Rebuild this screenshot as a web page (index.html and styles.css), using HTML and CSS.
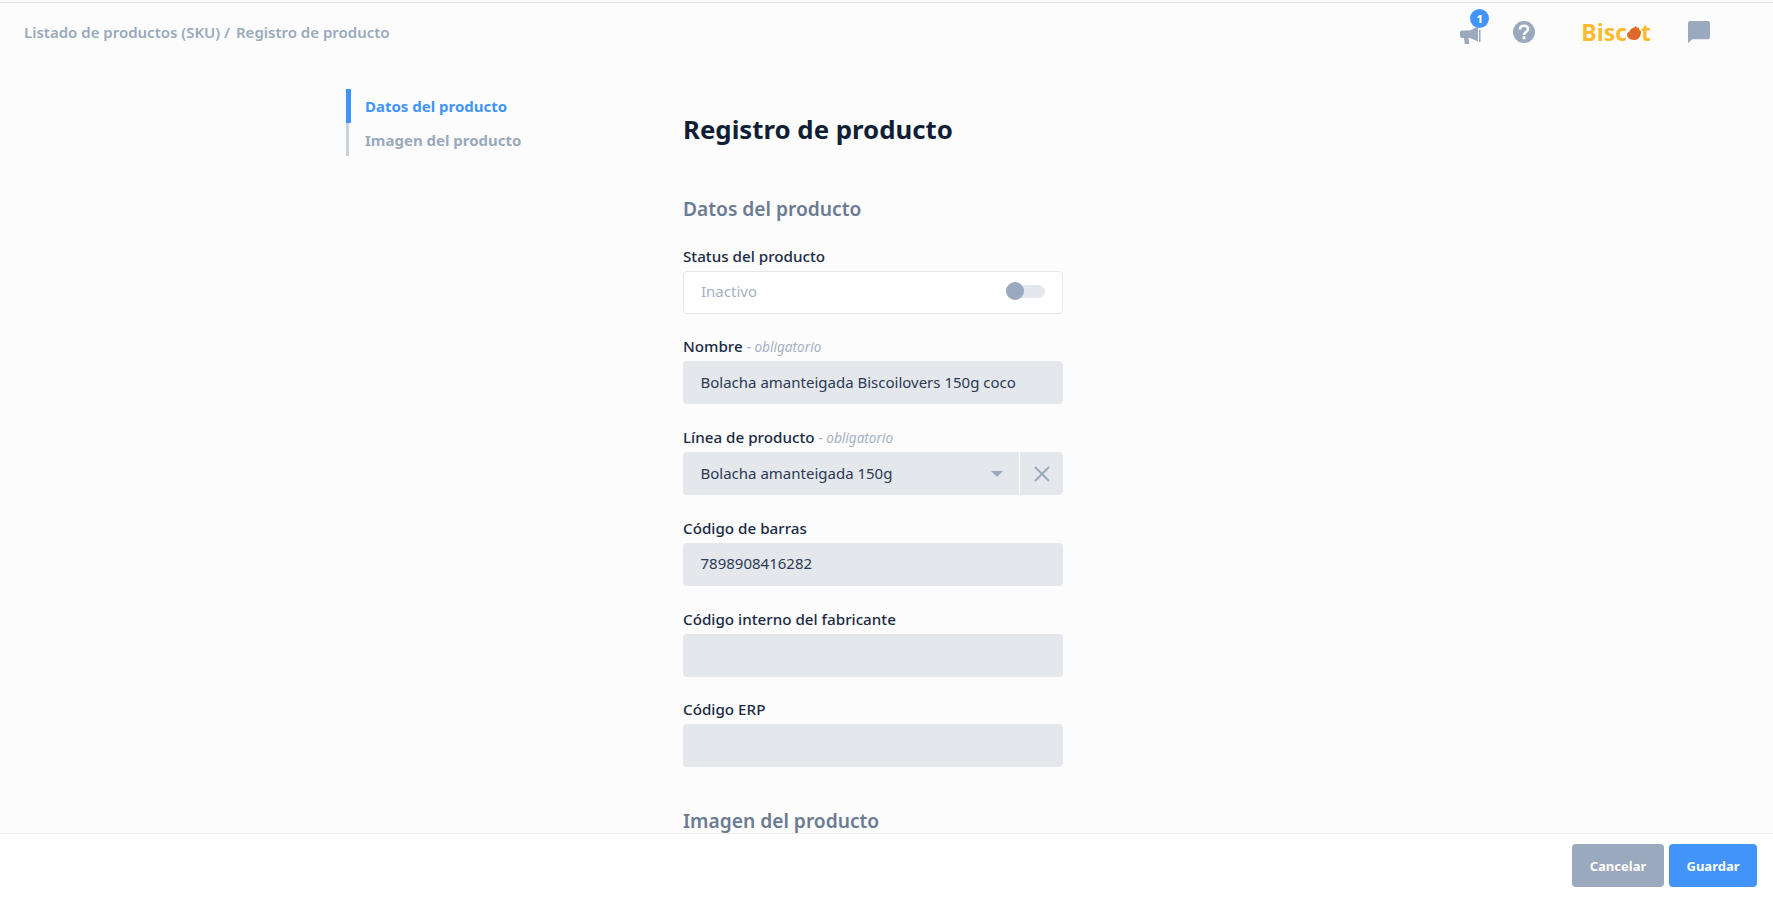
FILE: index.html
```html
<!doctype html>
<html>
<head>
    <meta charset="utf-8">
    <title>Registro de producto</title>
    <link rel="stylesheet" href="styles.css">
</head>
<body>
    <header class="topbar">
        <div class="breadcrumb">Listado de productos (SKU) / <span class="crumb-current">Registro de producto</span></div>
        <div class="topbar-icons">
            <div class="icon-news">
                <svg width="24" height="24" viewBox="0 0 24 24">
                    <path fill="#9aa9bd" d="M1 9.500c0-1.200.9-2 2-2h8l8-4v15l-8-3.600H9.500l.8 6.100H5.800l-.8-6.100H3c-1.100 0-2-.9-2-2z"/>
                    <rect x="20" y="7" width="1.500" height="12" fill="#9aa9bd"/>
                </svg>
                <span class="badge">1</span>
            </div>
            <svg class="icon-help" width="24" height="24" viewBox="0 0 24 24">
                <circle cx="12" cy="12" r="11" fill="#9aa9bd"/>
                <path fill="none" stroke="#fff" stroke-width="2.600" d="M8 9.500c0-2.400 1.800-3.700 4-3.700s4 1.300 4 3.400c0 2.900-4 2.800-4 5.800"/>
                <rect x="10.600" y="16.400" width="2.800" height="2.800" fill="#fff"/>
            </svg>
            <div class="logo">Bisc<svg class="logo-dot" width="14" height="14" viewBox="0 0 15 15"><path fill="#e0692a" d="M7.500 1.500 9.500 0l1 1.600 2.200.2.500 2.200L15 6c.2 5-3 9-7.500 9C3 15 0 12.500 0 9.500 0 8 1 6.700 2.300 6.500 3 4 5 2.300 7.500 1.500z"/></svg>t</div>
            <svg class="icon-chat" width="22" height="23" viewBox="0 0 24 25">
                <path fill="#9aa9bd" d="M2.500 1h19C22.900 1 24 2 24 3.500v15c0 1.400-1.100 2.500-2.500 2.500H4.500L1 24.500c-.5.400-1 .2-1-.5V3.500C0 2 1.100 1 2.500 1z"/>
            </svg>
        </div>
    </header>

    <main class="page">
        <nav class="side-nav">
            <a class="side-link active">Datos del producto</a>
            <a class="side-link">Imagen del producto</a>
        </nav>
        <section class="content">
            <h1 class="page-title">Registro de producto</h1>
            <h2 class="section-title">Datos del producto</h2>

            <div class="field">
                <label>Status del producto</label>
                <div class="status-box">
                    <span>Inactivo</span>
                    <span class="toggle"><span class="toggle-knob"></span></span>
                </div>
            </div>
            <div class="field">
                <label>Nombre <em>- obligatorio</em></label>
                <div class="input">Bolacha amanteigada Biscoilovers 150g coco</div>
            </div>
            <div class="field">
                <label>Línea de producto <em>- obligatorio</em></label>
                <div class="select-row">
                    <div class="input select">
                        <span>Bolacha amanteigada 150g</span>
                        <span class="caret"></span>
                    </div>
                    <div class="clear-btn">
                        <svg width="16" height="16" viewBox="0 0 16 16"><path stroke="#9aa9bd" stroke-width="2" d="M1 1l14 14M15 1L1 15"/></svg>
                    </div>
                </div>
            </div>
            <div class="field">
                <label>Código de barras</label>
                <div class="input">7898908416282</div>
            </div>
            <div class="field">
                <label>Código interno del fabricante</label>
                <div class="input"></div>
            </div>
            <div class="field">
                <label>Código ERP</label>
                <div class="input"></div>
            </div>

            <h2 class="section-title image-title">Imagen del producto</h2>
        </section>
    </main>

    <footer class="actions">
        <button class="btn btn-cancel">Cancelar</button>
        <button class="btn btn-save">Guardar</button>
    </footer>
</body>
</html>
```
FILE: styles.css
```css
html, body {
    margin: 0;
    height: 100%;
}
body {
    display: flex;
    flex-direction: column;
    height: 897px;
    overflow: hidden;
    background: #fcfcfc;
    font-family: "Noto Sans", "Open Sans", sans-serif;
    color: #1a2a44;
}
.topbar {
    flex: none;
    height: 54px;
    margin-top: 2px;
    border-top: 1px solid #e2e2e2;
    display: flex;
    align-items: center;
    justify-content: space-between;
    padding: 6px 63px 0 24px;
    box-sizing: border-box;
}
.breadcrumb {
    font-size: 15px;
    font-weight: 600;
    color: #9aa9bd;
    margin-top: -2px;
}
.crumb-current {
    margin-left: 2px;
}
.topbar-icons {
    display: flex;
    align-items: center;
}
.icon-news {
    position: relative;
    width: 24px;
    height: 24px;
    margin-top: 4px;
}
.badge {
    position: absolute;
    top: -14px;
    left: 11px;
    width: 19px;
    height: 19px;
    border-radius: 50%;
    background: #4294f9;
    color: #fff;
    font-size: 11px;
    font-weight: 800;
    line-height: 19px;
    text-align: center;
}
.icon-help {
    margin-left: 29px;
    margin-top: -2px;
}
.logo {
    margin-left: 45px;
    margin-top: -2px;
    display: flex;
    align-items: center;
    font-family: "Open Sans", sans-serif;
    font-size: 23px;
    font-weight: 700;
    line-height: 24px;
    color: #fbbb2c;
}
.logo-dot {
    margin: 3px 0 0 0;
}
.icon-chat {
    margin-left: 37px;
    margin-top: -2px;
}
.page {
    flex: 1;
    min-height: 0;
    overflow: hidden;
    display: flex;
    padding-left: 346px;
}
.side-nav {
    flex: none;
    width: 337px;
    padding-top: 33px;
}
.side-link {
    display: block;
    width: fit-content;
    height: 33.500px;
    line-height: 35px;
    padding-left: 16px;
    border-left: 3px solid #c9d2dd;
    font-size: 15px;
    font-weight: 700;
    color: #9aa9bd;
}
.side-link.active {
    padding-left: 14px;
    border-left: 5px solid #4294f9;
    color: #4294f9;
}
.content {
    width: 380px;
}
.page-title {
    margin: 55px 0 0;
    font-size: 25.800px;
    font-weight: 700;
    line-height: 36px;
    color: #111f35;
}
.section-title {
    margin: 49px 0 0;
    font-size: 19.200px;
    font-weight: 600;
    line-height: 26px;
    color: #6b7b92;
}
.image-title {
    margin-top: 41px;
}
.field {
    margin-top: 21.500px;
}
.field + .field {
    margin-top: 20.750px;
}
.field label {
    display: block;
    margin-bottom: 2px;
    font-size: 15.200px;
    font-weight: 500;
    line-height: 25px;
    color: #1a2a44;
}
.field em {
    font-size: 13.600px;
    font-weight: 400;
    line-height: 1;
    color: #a4b1c3;
}
.status-box {
    display: flex;
    align-items: center;
    justify-content: space-between;
    height: 43px;
    box-sizing: border-box;
    padding: 0 17px 2px;
    background: #fff;
    border: 1px solid #e4e7eb;
    border-radius: 4px;
    font-size: 15px;
    color: #a4b1c3;
}
.toggle {
    position: relative;
    width: 39px;
    height: 13px;
    border-radius: 7px;
    background: #e4e7eb;
}
.toggle-knob {
    position: absolute;
    top: -2.500px;
    left: 0;
    width: 18px;
    height: 18px;
    border-radius: 50%;
    background: #9aa9bd;
}
.input {
    height: 43px;
    box-sizing: border-box;
    padding: 0 17.500px 2px;
    display: flex;
    align-items: center;
    background: #e4e7eb;
    border-radius: 4px;
    font-size: 15px;
    color: #2c3a55;
}
.select-row {
    display: flex;
    gap: 1px;
}
.select {
    flex: 1;
    justify-content: space-between;
    padding-right: 16px;
    border-radius: 4px 0 0 4px;
}
.caret {
    width: 0;
    height: 0;
    margin-top: 2px;
    border-left: 6px solid transparent;
    border-right: 6px solid transparent;
    border-top: 6px solid #9aa9bd;
}
.clear-btn {
    width: 43px;
    height: 43px;
    display: flex;
    align-items: center;
    justify-content: center;
    background: #e4e7eb;
    border-radius: 0 4px 4px 0;
}
.actions {
    flex: none;
    height: 64px;
    box-sizing: border-box;
    padding: 10px 16px 0 0;
    display: flex;
    justify-content: flex-end;
    gap: 5px;
    background: #fff;
    border-top: 1px solid #f0f0f0;
}
.btn {
    height: 43px;
    border: 0;
    border-radius: 4px;
    color: #fff;
    font-family: "Noto Sans", sans-serif;
    font-size: 13px;
    font-weight: 700;
}
.btn-cancel {
    width: 92px;
    background: #9aa9bd;
}
.btn-save {
    width: 88px;
    background: #4294f9;
}
```
